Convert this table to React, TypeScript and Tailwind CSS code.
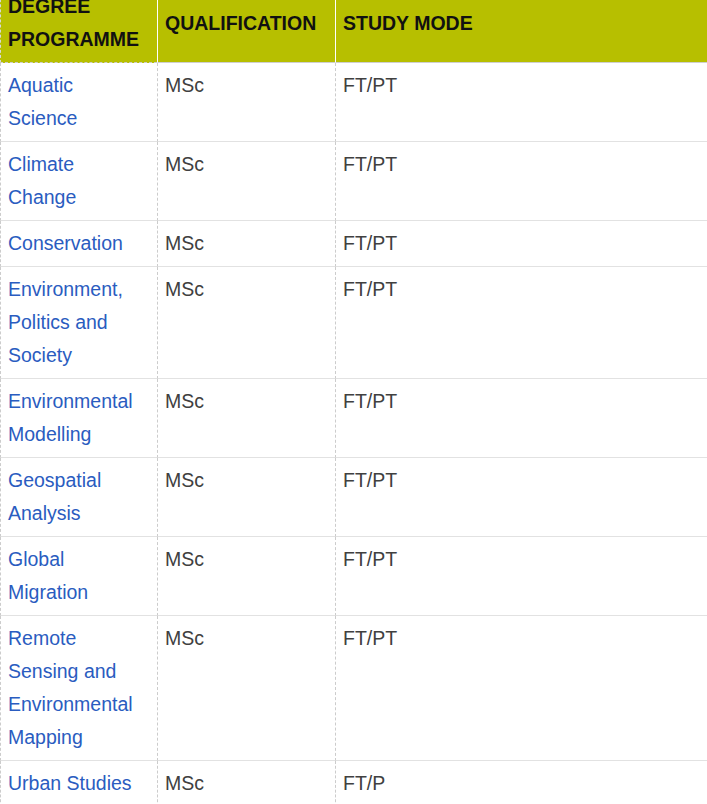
import React from "react";

const rows: [string[], string][] = [
  [["Aquatic", "Science"], "FT/PT"],
  [["Climate", "Change"], "FT/PT"],
  [["Conservation"], "FT/PT"],
  [["Environment,", "Politics and", "Society"], "FT/PT"],
  [["Environmental", "Modelling"], "FT/PT"],
  [["Geospatial", "Analysis"], "FT/PT"],
  [["Global", "Migration"], "FT/PT"],
  [["Remote", "Sensing and", "Environmental", "Mapping"], "FT/PT"],
  [["Urban Studies"], "FT/P"],
];

export default function App() {
  return (
    <div
      className="w-[707px] h-[804px] overflow-hidden bg-white"
      style={{ fontFamily: '"Liberation Sans", Arial, sans-serif' }}
    >
      <table className="mt-[-16px] border-separate border-spacing-0 table-fixed w-[760px] text-[19.5px] leading-[33px]">
        <colgroup>
          <col className="w-[157px]" />
          <col className="w-[178px]" />
          <col className="w-[425px]" />
        </colgroup>
        <thead>
          <tr className="bg-[#b7bf00]">
            <th className="text-left align-middle font-bold text-[#111] pl-[7px] pr-[4px] py-[6px] border-l border-dashed border-l-[#d8d8d8] border-b border-b-[#cfcfcf]">
              DEGREE
              <br />
              PROGRAMME
            </th>
            <th className="text-left align-middle font-bold text-[#111] pl-[7px] pr-[4px] py-[6px] border-l border-solid border-l-white border-b border-dashed border-b-[#cfcfcf]">
              QUALIFICATION
            </th>
            <th className="text-left align-middle font-bold text-[#111] pl-[7px] pr-[4px] py-[6px] border-l border-solid border-l-white border-b border-dashed border-b-[#cfcfcf]">
              STUDY MODE
            </th>
          </tr>
        </thead>
        <tbody>
          {rows.map(([name, mode], i) => (
            <tr key={i}>
              <td className="align-top pl-[7px] pr-[4px] py-[6px] text-[#2a5cc0] border-l border-dashed border-l-[#cccccc] border-b border-b-[#e2e2e2] [border-bottom-style:solid]">
                {name.map((l, j) => (
                  <div key={j} className="whitespace-nowrap">
                    {l}
                  </div>
                ))}
              </td>
              <td className="align-top pl-[7px] pr-[4px] py-[6px] text-[#404040] border-l border-dashed border-l-[#cccccc] border-b border-b-[#e2e2e2] [border-bottom-style:solid]">
                MSc
              </td>
              <td className="align-top pl-[7px] pr-[4px] py-[6px] text-[#404040] border-l border-dashed border-l-[#cccccc] border-b border-b-[#e2e2e2] [border-bottom-style:solid]">
                {mode}
              </td>
            </tr>
          ))}
        </tbody>
      </table>
    </div>
  );
}
